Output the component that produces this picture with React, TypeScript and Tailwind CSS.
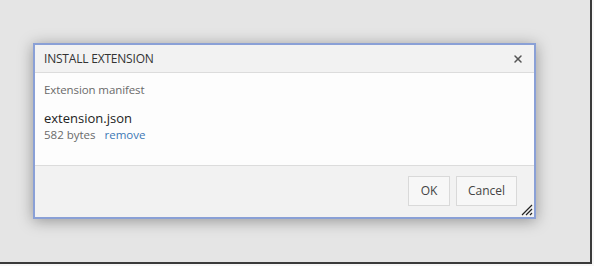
import { X } from 'lucide-react';

export default function App() {
  return (
    <div className="w-[594px] h-[266px] bg-[#f7f7f7] font-['Open_Sans',sans-serif]">
      <div className="w-[592px] h-[264px] border-r-2 border-b-2 border-[#3a3a3a]">
        <div className="w-full h-full bg-[#e5e5e5] pt-[43px] pl-[33px]">
          {/* Dialog */}
          <div className="w-[503px] h-[176px] flex flex-col border-2 border-[#8aa0d6] bg-white shadow-[0_2px_14px_rgba(0,0,0,0.35)]">
            <div className="h-[28px] flex items-center justify-between pl-[9px] pr-[10px] bg-[#f2f2f2] border-b border-[#dcdcdc]">
              <span className="text-[12px] text-[#333] tracking-[-0.2px]">INSTALL EXTENSION</span>
              <X className="w-[12px] h-[12px] text-[#555]" strokeWidth={3} />
            </div>
            <div className="h-[93px] pl-[9px] pt-[9px] bg-[#fdfdfd] border-b border-[#dcdcdc]">
              <p className="text-[11.5px] text-[#6a6a6a] leading-[16px] tracking-[-0.1px]">Extension manifest</p>
              <p className="mt-[12px] text-[13px] text-[#222] leading-[17px]">extension.json</p>
              <p className="text-[11.5px] leading-[16px]">
                <span className="text-[#6a6a6a]">582 bytes</span>
                <a className="ml-[9px] text-[#3c78b5]">remove</a>
              </p>
            </div>
            <div className="flex-1 relative bg-[#f2f2f2] flex justify-end items-start pt-[10px] pr-[17px] gap-[6px]">
              <button className="w-[42px] h-[30px] border border-[#d9d9d9] bg-[#f7f7f7] text-[12px] text-[#444]">OK</button>
              <button className="w-[61px] h-[30px] border border-[#d9d9d9] bg-[#f7f7f7] text-[12px] text-[#444]">Cancel</button>
              <svg className="absolute right-[1px] bottom-[1px]" width="13" height="13" viewBox="0 0 13 13">
                <path d="M12 2 L2 12 M12 6 L6 12 M12 10 L10 12" stroke="#222" strokeWidth="1.2" />
              </svg>
            </div>
          </div>
        </div>
      </div>
    </div>
  );
}
